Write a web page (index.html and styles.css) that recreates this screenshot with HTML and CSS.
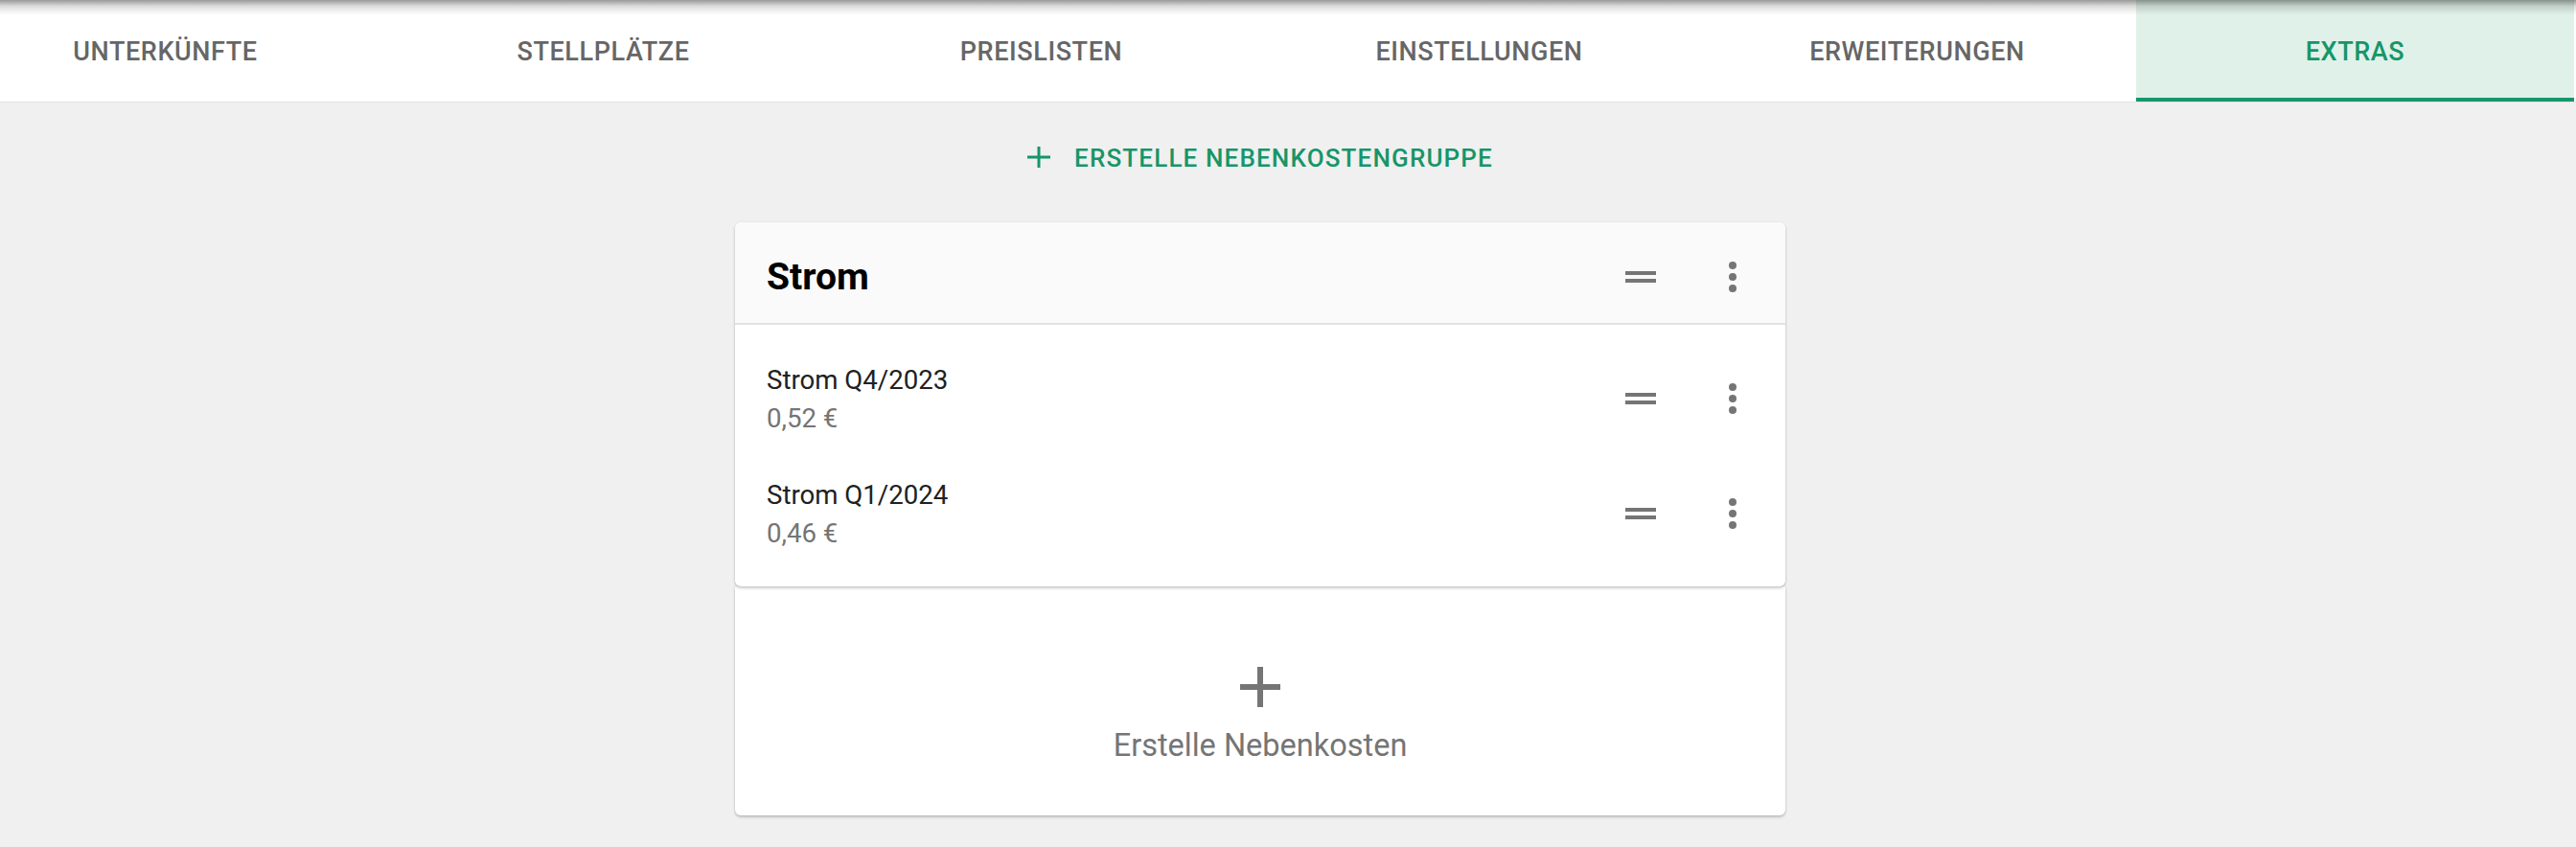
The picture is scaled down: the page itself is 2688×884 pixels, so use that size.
FILE: index.html
```html
<!DOCTYPE html>
<html lang="de">
<head>
<meta charset="utf-8">
<title>Extras</title>
<link rel="stylesheet" href="styles.css">
</head>
<body>
<header class="tabbar">
  <nav class="tabs">
    <div class="tab">Unterkünfte</div>
    <div class="tab">Stellplätze</div>
    <div class="tab">Preislisten</div>
    <div class="tab">Einstellungen</div>
    <div class="tab">Erweiterungen</div>
    <div class="tab tab-active">Extras</div>
  </nav>
  <div class="topshade"></div>
</header>
<main class="main">
  <button class="add-group">
    <svg class="add-small" viewBox="0 0 24 24" width="24" height="24"><rect x="10.5" y="0" width="3" height="22" fill="currentColor"/><rect x="0" y="9.5" width="24" height="3" fill="currentColor"/></svg>
    <span>Erstelle Nebenkostengruppe</span>
  </button>
  <section class="card group">
    <div class="group-head">
      <h2 class="group-title">Strom</h2>
      <div class="actions">
        <svg class="icon" viewBox="0 0 24 24"><path d="M20 9H4v2h16V9zM4 15h16v-2H4v2z"/></svg>
        <svg class="icon" viewBox="0 0 24 24"><circle cx="12" cy="6" r="2"/><circle cx="12" cy="12" r="2"/><circle cx="12" cy="18" r="2"/></svg>
      </div>
    </div>
    <ul class="items">
      <li class="item">
        <div class="item-text">
          <div class="item-name">Strom Q4/2023</div>
          <div class="item-price">0,52 €</div>
        </div>
        <div class="actions">
          <svg class="icon" viewBox="0 0 24 24"><path d="M20 9H4v2h16V9zM4 15h16v-2H4v2z"/></svg>
          <svg class="icon" viewBox="0 0 24 24"><circle cx="12" cy="6" r="2"/><circle cx="12" cy="12" r="2"/><circle cx="12" cy="18" r="2"/></svg>
        </div>
      </li>
      <li class="item">
        <div class="item-text">
          <div class="item-name">Strom Q1/2024</div>
          <div class="item-price">0,46 €</div>
        </div>
        <div class="actions">
          <svg class="icon" viewBox="0 0 24 24"><path d="M20 9H4v2h16V9zM4 15h16v-2H4v2z"/></svg>
          <svg class="icon" viewBox="0 0 24 24"><circle cx="12" cy="6" r="2"/><circle cx="12" cy="12" r="2"/><circle cx="12" cy="18" r="2"/></svg>
        </div>
      </li>
    </ul>
  </section>
  <section class="card add-card">
    <svg class="add-big" viewBox="0 0 24 24"><path d="M19 13h-6v6h-2v-6H5v-2h6V5h2v6h6v2z"/></svg>
    <div class="add-label">Erstelle Nebenkosten</div>
  </section>
</main>
</body>
</html>
```
FILE: styles.css
```css
* { box-sizing: border-box; }
html, body { margin: 0; padding: 0; }
body {
  background: #f0f0f0;
  font-family: Roboto, "Noto Sans", "Liberation Sans", sans-serif;
  width: 2688px;
  height: 884px;
  overflow: hidden;
}
.tabbar {
  position: relative;
  height: 107px;
  background: #ffffff;
  border-bottom: 1px solid #e3e3e3;
  overflow: hidden;
}
.tabs {
  display: flex;
  margin-left: -56px;
  height: 106px;
}
.tab {
  flex: 0 0 457px;
  display: flex;
  align-items: center;
  justify-content: center;
  padding-top: 2px;
  text-transform: uppercase;
  font-size: 27px;
  font-weight: 500;
  letter-spacing: 0.6px;
  color: #666666;
}
.tab-active {
  background: #e0f1e9;
  color: #15966a;
  border-bottom: 4px solid #15966a;
  padding-top: 6px;
}
.topshade {
  position: absolute;
  left: 0; top: 0; right: 0;
  height: 16px;
  background: linear-gradient(to bottom, rgba(0,0,0,0.40) 0%, rgba(0,0,0,0.14) 40%, rgba(0,0,0,0.04) 80%, rgba(0,0,0,0) 100%);
  pointer-events: none;
}
.main {
  width: 2630px;
  display: flex;
  flex-direction: column;
  align-items: center;
}
.add-group {
  margin-top: 18px;
  margin-bottom: 27px;
  height: 80px;
  display: flex;
  align-items: center;
  gap: 25px;
  padding: 0 16px;
  border: none;
  background: transparent;
  color: #15966a;
  font-family: Roboto, "Noto Sans", "Liberation Sans", sans-serif;
  font-size: 26px;
  font-weight: 500;
  letter-spacing: 1.15px;
  text-transform: uppercase;
}
.add-small { display: block; width: 24px; height: 24px; }
.card {
  width: 1096px;
  background: #ffffff;
  border-radius: 6px;
  box-shadow: 0 2px 3px rgba(0,0,0,0.20), 0 0 2px rgba(0,0,0,0.10);
}
.group {
  position: relative;
  z-index: 2;
  overflow: hidden;
}
.group-head {
  height: 107px;
  padding: 8px 31px 0 33px;
  background: #fafafa;
  border-bottom: 2px solid #e3e3e3;
  display: flex;
  align-items: center;
  justify-content: space-between;
}
.group-title {
  margin: 0;
  font-size: 39px;
  font-weight: 700;
  line-height: 48px;
  color: #000000;
}
.actions {
  display: flex;
  gap: 48px;
}
.icon {
  display: block;
  width: 48px;
  height: 48px;
  fill: #757575;
}
.items {
  list-style: none;
  margin: 0;
  padding: 17px 0 16px;
}
.item {
  height: 120px;
  padding: 0 31px 0 33px;
  display: flex;
  align-items: center;
  justify-content: space-between;
}
.item-text { padding-top: 2px; }
.item-name, .item-price {
  font-size: 27.6px;
  line-height: 40px;
}
.item-name { color: #212121; }
.item-price { color: #757575; }
.add-card {
  position: relative;
  z-index: 1;
  height: 239px;
  border-radius: 0 0 6px 6px;
  display: flex;
  flex-direction: column;
  align-items: center;
  padding-top: 69px;
}
.add-big {
  display: block;
  width: 72px;
  height: 72px;
  fill: #757575;
}
.add-label {
  margin-top: 5px;
  font-size: 32.5px;
  line-height: 40px;
  color: #757575;
}
```
